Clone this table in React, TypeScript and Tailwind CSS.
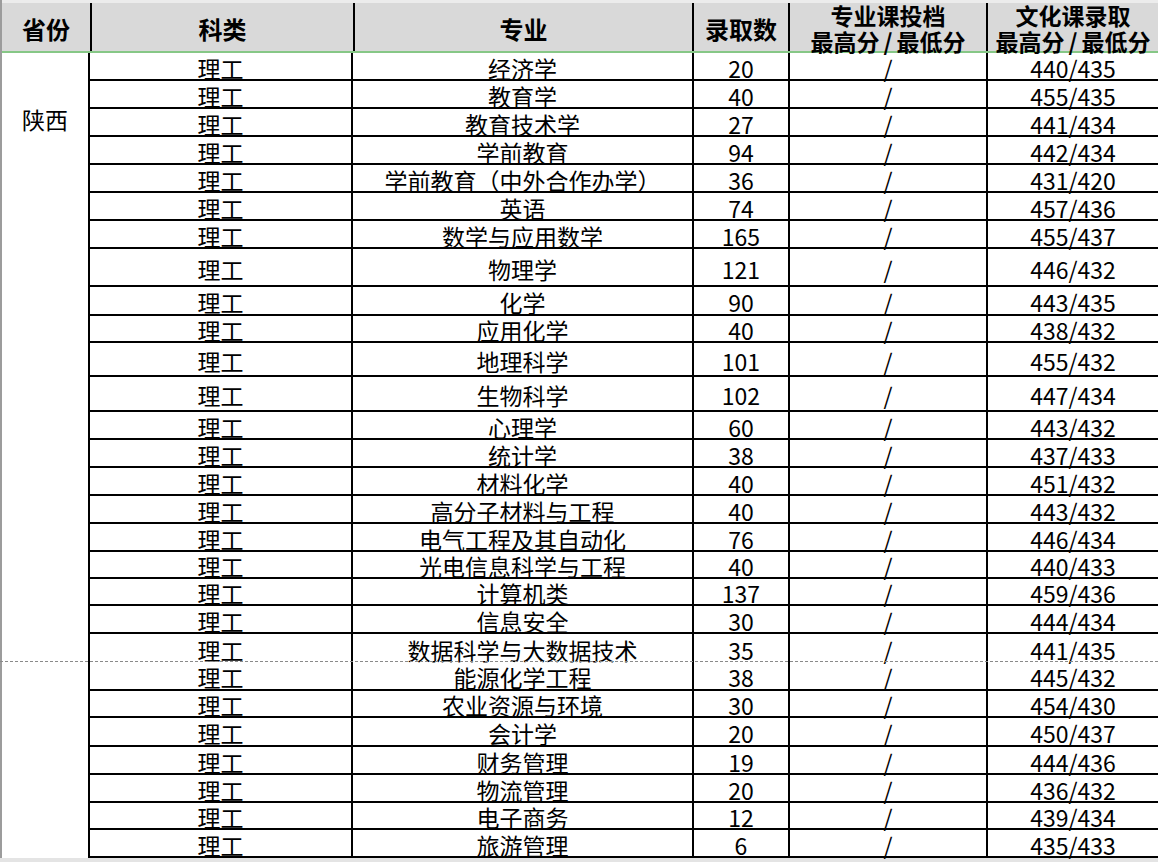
import React from "react";

type Row = [string, string, string, string];

const rows: Row[] = [
  ["经济学", "20", "440/435", "h-[28px]"],
  ["教育学", "40", "455/435", "h-[28px]"],
  ["教育技术学", "27", "441/434", "h-[28px]"],
  ["学前教育", "94", "442/434", "h-[28px]"],
  ["学前教育（中外合作办学）", "36", "431/420", "h-[28px]"],
  ["英语", "74", "457/436", "h-[28px]"],
  ["数学与应用数学", "165", "455/437", "h-[28px]"],
  ["物理学", "121", "446/432", "h-[38px]"],
  ["化学", "90", "443/435", "h-[29px]"],
  ["应用化学", "40", "438/432", "h-[27px]"],
  ["地理科学", "101", "455/432", "h-[34px]"],
  ["生物科学", "102", "447/434", "h-[35px]"],
  ["心理学", "60", "443/432", "h-[28px]"],
  ["统计学", "38", "437/433", "h-[28px]"],
  ["材料化学", "40", "451/432", "h-[28px]"],
  ["高分子材料与工程", "40", "443/432", "h-[28px]"],
  ["电气工程及其自动化", "76", "446/434", "h-[28px]"],
  ["光电信息科学与工程", "40", "440/433", "h-[27px]"],
  ["计算机类", "137", "459/436", "h-[27px]"],
  ["信息安全", "30", "444/434", "h-[28px]"],
  ["数据科学与大数据技术", "35", "441/435", "h-[28px]"],
  ["能源化学工程", "38", "445/432", "h-[29px]"],
  ["农业资源与环境", "30", "454/430", "h-[27px]"],
  ["会计学", "20", "450/437", "h-[29px]"],
  ["财务管理", "19", "444/436", "h-[28px]"],
  ["物流管理", "20", "436/432", "h-[28px]"],
  ["电子商务", "12", "439/434", "h-[27px]"],
  ["旅游管理", "6", "435/433", "h-[28px]"],
];

const cell =
  "flex items-center justify-center pt-[4px] text-[23px] leading-none whitespace-nowrap";

function TwoLine({ top }: { top: string }) {
  return (
    <>
      <span className="leading-[26px]">{top}</span>
      <span className="leading-[26px] whitespace-nowrap">
        最高分<span className="mx-[4px]">/</span>最低分
      </span>
    </>
  );
}

export default function App() {
  return (
    <div className="relative w-[1158px] h-[862px] overflow-hidden bg-[#e4e4e4] text-black font-['Noto_Sans_CJK_SC','Noto_Sans',sans-serif]">
      <div className="bg-white border-l-2 border-[#9c9c9c]">
        {/* header */}
        <div className="flex h-[53px] bg-[#d9d9d9] border-t-[3px] border-t-[#ececec] border-b-2 border-b-[#86c786] font-bold">
          <div className="w-[88px] flex items-center justify-center pt-[4px] text-[24px] leading-none">
            省份
          </div>
          <div className="w-[263px] border-l-2 border-black flex items-center justify-center pt-[4px] text-[24px] leading-none">
            科类
          </div>
          <div className="w-[339px] border-l-2 border-black flex items-center justify-center pt-[4px] text-[24px] leading-none">
            专业
          </div>
          <div className="w-[96px] border-l-2 border-black flex items-center justify-center pt-[4px] text-[24px] leading-none">
            录取数
          </div>
          <div className="w-[198px] border-l-2 border-black flex flex-col items-center justify-center pt-[2px] text-[23px]">
            <TwoLine top="专业课投档" />
          </div>
          <div className="flex-1 border-l-2 border-black flex flex-col items-center justify-center pt-[2px] text-[23px]">
            <TwoLine top="文化课录取" />
          </div>
        </div>
        {/* body */}
        <div className="flex">
          <div className="w-[88px] border-r-2 border-black flex justify-center pt-[55px] text-[23px] leading-none">
            陕西
          </div>
          <div className="flex-1 flex flex-col">
            {rows.map(([major, count, score, h], i) => (
              <div
                key={i}
                className={`flex ${h} ${i === 20 ? "" : "border-b-2 border-black"}`}
              >
                <div className={`w-[261px] ${cell}`}>理工</div>
                <div className={`w-[341px] border-l-2 border-black ${cell}`}>{major}</div>
                <div className={`w-[96px] border-l-2 border-black ${cell}`}>{count}</div>
                <div className={`w-[198px] border-l-2 border-black ${cell}`}>/</div>
                <div className={`flex-1 border-l-2 border-black ${cell}`}>{score}</div>
              </div>
            ))}
          </div>
        </div>
      </div>
      <div className="absolute left-0 right-0 top-[661px] border-t border-dashed border-[#8a8a8a]" />
    </div>
  );
}
